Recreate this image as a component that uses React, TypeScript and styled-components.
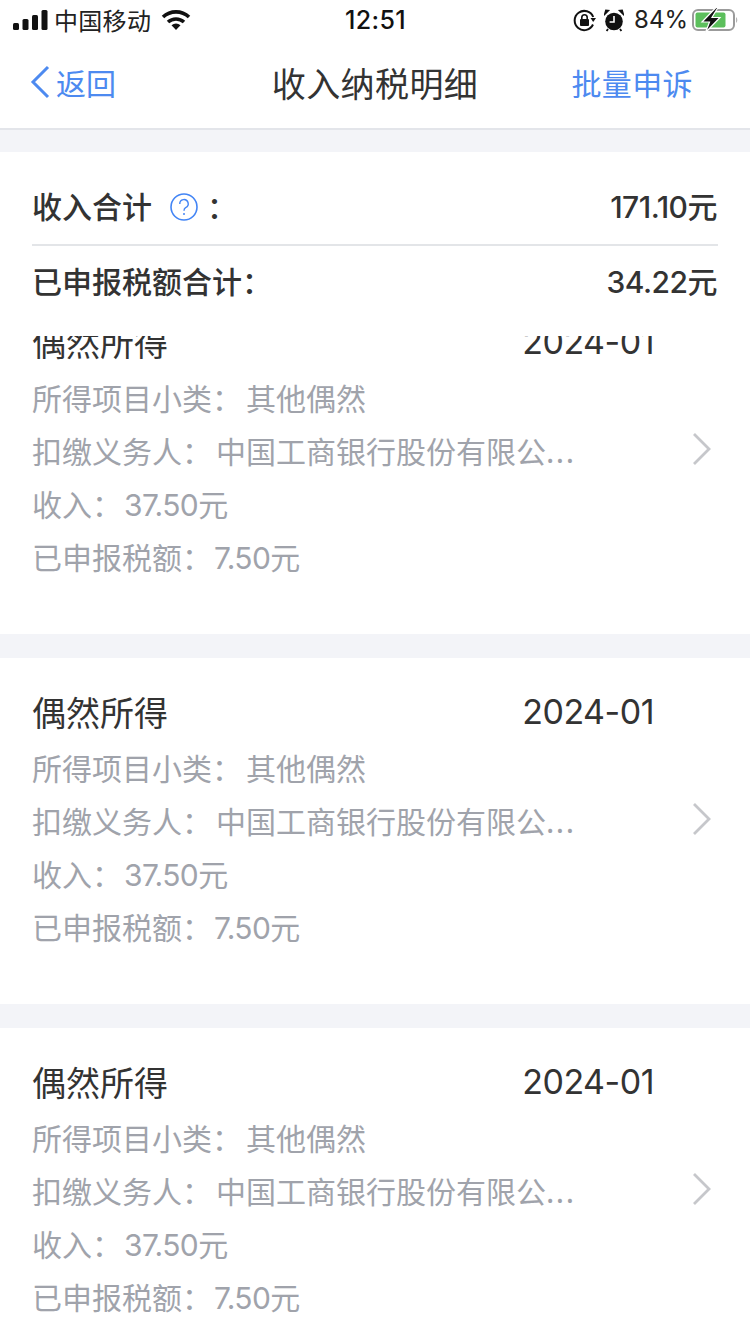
import React from "react";
import styled, { createGlobalStyle } from "styled-components";

const Global = createGlobalStyle`
  html, body { margin: 0; padding: 0; background: #f3f4f8; }
  body { font-family: "Noto Sans CJK SC", "Noto Sans", sans-serif; }
  * { box-sizing: border-box; }
`;

const Page = styled.div`
  width: 750px;
  height: 1334px;
  overflow: hidden;
  display: flex;
  flex-direction: column;
  background: #f3f4f8;
`;

const StatusBar = styled.div`
  height: 40px;
  background: #fff;
  display: grid;
  grid-template-columns: 1fr auto 1fr;
  align-items: center;
  padding: 0 12px 0 13px;
  color: #111;
`;
const StatusLeft = styled.div`
  display: flex;
  align-items: center;
  gap: 6px;
`;
const Carrier = styled.span`
  font-size: 24px;
  line-height: 40px;
  letter-spacing: 0.3px;
  margin-right: 4px;
  color: #222;
`;
const Clock = styled.span`
  font-family: "Inter", sans-serif;
  font-size: 25px;
  font-weight: 500;
  letter-spacing: 0.4px;
  line-height: 40px;
`;
const StatusRight = styled.div`
  display: flex;
  align-items: center;
  justify-content: flex-end;
  gap: 8px;
`;
const Percent = styled.span`
  font-family: "Inter", sans-serif;
  font-size: 24px;
  line-height: 40px;
  margin: 0 -4px 0 2px;
  color: #222;
`;

const Nav = styled.div`
  height: 90px;
  background: #fff;
  border-bottom: 2px solid #e3e5ea;
  display: grid;
  grid-template-columns: 1fr auto 1fr;
  align-items: center;
  padding: 0 30px 4px;
`;
const Back = styled.div`
  display: flex;
  align-items: center;
  gap: 6px;
  color: #4d8af0;
  font-size: 30px;
`;
const NavTitle = styled.div`
  font-size: 34px;
  letter-spacing: 0.4px;
  color: #333;
`;
const NavAction = styled.div`
  justify-self: end;
  margin-right: 27px;
  letter-spacing: 0.4px;
  color: #4d8af0;
  font-size: 30px;
`;

const Summary = styled.div`
  margin-top: 22px;
  background: #fff;
  padding: 0 32px;
  height: 184px;
  flex: none;
`;
const SummaryRow = styled.div<{ $divided?: boolean }>`
  height: ${(p) => (p.$divided ? 94 : 68)}px;
  padding-top: ${(p) => (p.$divided ? 14 : 0)}px;
  display: flex;
  align-items: center;
  justify-content: space-between;
  border-bottom: ${(p) => (p.$divided ? "2px solid #e3e5e8" : "none")};
  font-size: 30px;
  font-weight: 500;
  color: #333;
`;
const SummaryLabel = styled.div`
  display: flex;
  align-items: center;
  gap: 18px;
`;
const LabelColon = styled.span`
  margin-left: -9px;
`;
const HelpIcon = styled.svg`
  margin-top: 3px;
`;
const Amount = styled.span`
  font-family: "Inter", "Noto Sans CJK SC", sans-serif;
  letter-spacing: -0.5px;
  margin-right: 1px;
`;
const Viewport = styled.div`
  flex: 1;
  min-height: 0;
  overflow: hidden;
  background: #f3f4f8;
`;
const ScrollContent = styled.div`
  margin-top: -48px;
  display: flex;
  flex-direction: column;
  gap: 24px;
`;
const Card = styled.div`
  height: 346px;
  flex: none;
  background: #fff;
  padding: 23px 38px 0 32px;
  display: grid;
  grid-template-columns: 1fr auto;
  column-gap: 38px;
  align-items: center;
  align-content: start;
`;
const CardBody = styled.div`
  min-width: 0;
`;
const TitleRow = styled.div`
  height: 60px;
  display: flex;
  align-items: center;
  justify-content: space-between;
  font-size: 34px;
  color: #333;
`;
const Period = styled.span`
  font-family: "Inter", sans-serif;
  letter-spacing: -0.5px;
`;
const DetailRow = styled.div`
  height: 53px;
  line-height: 53px;
  font-size: 30px;
  color: #a0a3ab;
  white-space: nowrap;
`;
const DetailLabel = styled.span<{ $tight?: boolean }>`
  margin-right: ${(p) => (p.$tight ? 2 : 4)}px;
`;
const DetailNumber = styled.span`
  font-family: "Inter", "Noto Sans CJK SC", sans-serif;
  letter-spacing: -0.6px;
`;
const Ellipsis = styled.span`
  letter-spacing: 1.5px;
`;
const ChevronSlot = styled.div`
  display: flex;
  margin-top: 4px;
`;

function Signal() {
  return (
    <svg width="35" height="20" viewBox="0 0 35 20">
      <rect x="0" y="13" width="6" height="7" rx="1.5" fill="#111" />
      <rect x="9.5" y="9" width="6" height="11" rx="1.5" fill="#111" />
      <rect x="19" y="5" width="6" height="15" rx="1.5" fill="#111" />
      <rect x="28.5" y="0" width="6" height="20" rx="1.5" fill="#111" />
    </svg>
  );
}
function Wifi() {
  return (
    <svg width="30" height="22" viewBox="0 0 30 22">
      <path d="M2 8 A19 19 0 0 1 28 8" fill="none" stroke="#111" strokeWidth="3.6" />
      <path d="M7 13 A12 12 0 0 1 23 13" fill="none" stroke="#111" strokeWidth="3.6" />
      <path d="M10.5 16.2 A7 7 0 0 1 19.5 16.2 L15 21 Z" fill="#111" />
    </svg>
  );
}
function RotationLock() {
  return (
    <svg width="23" height="23" viewBox="0 0 23 23">
      <path d="M20 15.5 A9.6 9.6 0 1 1 20.2 8" fill="none" stroke="#111" strokeWidth="2" />
      <path d="M17.5 9 L23 9 L20.2 13 Z" fill="#111" />
      <rect x="7" y="10" width="9" height="7" rx="1" fill="#111" />
      <path d="M8.8 10 V8.4 A2.7 2.7 0 0 1 14.2 8.4 V10" fill="none" stroke="#111" strokeWidth="1.6" />
    </svg>
  );
}
function Alarm() {
  return (
    <svg width="20" height="23" viewBox="0 0 20 23">
      <circle cx="10" cy="12.5" r="8.8" fill="#111" />
      <path d="M0.6 5.5 L4.6 1.6 L1.8 1.2 Z M19.4 5.5 L15.4 1.6 L18.2 1.2 Z" fill="#111" stroke="#111" strokeWidth="1.4" />
      <path d="M10 7 V13 H5.6" fill="none" stroke="#fff" strokeWidth="1.6" />
      <path d="M4 20 L2.6 22 M16 20 L17.4 22" stroke="#111" strokeWidth="1.8" />
    </svg>
  );
}
function Battery() {
  return (
    <svg width="46" height="26" viewBox="0 0 46 26">
      <rect x="1" y="3" width="41" height="20" rx="5" fill="none" stroke="#9b9b9b" strokeWidth="2" />
      <rect x="3.5" y="5.5" width="30" height="15" rx="2" fill="#5cbf5c" />
      <path d="M44 10 A4 4 0 0 1 44 16 Z" fill="#b5b5b5" />
      <path d="M24 0.5 L10 15 H17.5 L13.5 25.5 L28 10.5 H20 L26 0.5 Z" fill="#111" stroke="#fff" strokeWidth="1.2" />
    </svg>
  );
}
function BackChevron() {
  return (
    <svg width="20" height="34" viewBox="0 0 20 34">
      <path d="M18 2 L3 17 L18 32" fill="none" stroke="#4d8af0" strokeWidth="3" />
    </svg>
  );
}
function Help() {
  return (
    <HelpIcon width="28" height="28" viewBox="0 0 28 28">
      <circle cx="14" cy="14" r="13" fill="none" stroke="#4385f5" strokeWidth="1.6" />
      <path d="M9.8 11 A4.2 4.2 0 1 1 15.6 14.6 C14.3 15.3 14 16 14 17.8" fill="none" stroke="#4385f5" strokeWidth="1.4" />
      <circle cx="14" cy="21" r="1" fill="#4385f5" />
    </HelpIcon>
  );
}
function RowChevron() {
  return (
    <svg width="20" height="34" viewBox="0 0 20 34">
      <path d="M2 2 L17 17 L2 32" fill="none" stroke="#c6c7cb" strokeWidth="2.8" />
    </svg>
  );
}

const cards = [0, 1, 2];

export default function App() {
  return (
    <Page>
      <Global />
      <StatusBar>
        <StatusLeft>
          <Signal />
          <Carrier>中国移动</Carrier>
          <Wifi />
        </StatusLeft>
        <Clock>12:51</Clock>
        <StatusRight>
          <RotationLock />
          <Alarm />
          <Percent>84%</Percent>
          <Battery />
        </StatusRight>
      </StatusBar>
      <Nav>
        <Back>
          <BackChevron />
          返回
        </Back>
        <NavTitle>收入纳税明细</NavTitle>
        <NavAction>批量申诉</NavAction>
      </Nav>
      <Summary>
        <SummaryRow $divided>
          <SummaryLabel>
            收入合计
            <Help />
            <LabelColon>：</LabelColon>
          </SummaryLabel>
          <Amount>171.10元</Amount>
        </SummaryRow>
        <SummaryRow>
          <span>已申报税额合计：</span>
          <Amount>34.22元</Amount>
        </SummaryRow>
      </Summary>
      <Viewport>
        <ScrollContent>
          {cards.map((c) => (
            <Card key={c}>
              <CardBody>
                <TitleRow>
                  <span>偶然所得</span>
                  <Period>2024-01</Period>
                </TitleRow>
                <DetailRow>
                  <DetailLabel>所得项目小类：</DetailLabel>其他偶然
                </DetailRow>
                <DetailRow>
                  <DetailLabel>扣缴义务人：</DetailLabel>中国工商银行股份有限公
                  <Ellipsis>...</Ellipsis>
                </DetailRow>
                <DetailRow>
                  <DetailLabel $tight>收入：</DetailLabel>
                  <DetailNumber>37.50</DetailNumber>元
                </DetailRow>
                <DetailRow>
                  <DetailLabel $tight>已申报税额：</DetailLabel>
                  <DetailNumber>7.50</DetailNumber>元
                </DetailRow>
              </CardBody>
              <ChevronSlot>
                <RowChevron />
              </ChevronSlot>
            </Card>
          ))}
        </ScrollContent>
      </Viewport>
    </Page>
  );
}
